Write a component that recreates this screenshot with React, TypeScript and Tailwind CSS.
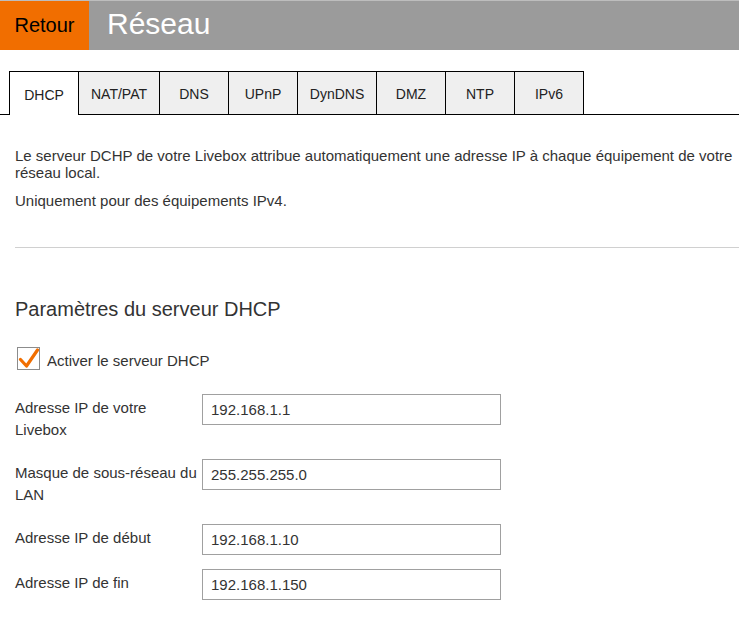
import React from 'react';

const tabs: { label: string; width: string }[] = [
  { label: 'DHCP', width: 'w-[69px]' },
  { label: 'NAT/PAT', width: 'w-[81px]' },
  { label: 'DNS', width: 'w-[69px]' },
  { label: 'UPnP', width: 'w-[69px]' },
  { label: 'DynDNS', width: 'w-[79px]' },
  { label: 'DMZ', width: 'w-[69px]' },
  { label: 'NTP', width: 'w-[69px]' },
  { label: 'IPv6', width: 'w-[70px] border-r' },
];

const fields = [
  { label: 'Adresse IP de votre Livebox', value: '192.168.1.1' },
  { label: 'Masque de sous-réseau du LAN', value: '255.255.255.0' },
  { label: 'Adresse IP de début', value: '192.168.1.10' },
  { label: 'Adresse IP de fin', value: '192.168.1.150' },
];

const CheckMark: React.FC = () => (
  <span className="w-[23px] h-[23px] border border-[#8c8c8c] bg-white flex items-center justify-center shrink-0">
    <svg width="21" height="21" viewBox="0 0 21 21" fill="none">
      <path d="M2.5 11.5 L8.5 18 L19.5 2" stroke="#f16e00" strokeWidth="3.2" strokeLinecap="round" strokeLinejoin="round" />
    </svg>
  </span>
);

export default function App() {
  return (
    <div className="w-[739px] h-[627px] overflow-hidden bg-white text-[#333] font-['Liberation_Sans',Arial,sans-serif]">
      {/* top bar */}
      <header className="flex h-[50px] border-t border-[#bdbdbd]">
        <div className="w-[89px] bg-[#f16e00] flex items-center justify-center text-[20px] text-black pb-[1px]">Retour</div>
        <div className="flex-1 bg-[#9b9b9b] flex items-center pl-[18px] text-[30px] text-white pb-[4px]">Réseau</div>
      </header>

      {/* tabs */}
      <nav className="mt-[21px] flex items-end pl-[9px] border-b border-black">
        {tabs.map((t, i) => (
          <div
            key={t.label}
            className={`${t.width} border-l border-t border-black flex items-center justify-center text-[14px] text-[#222] pt-[3px] ${
              i === 0 ? 'h-[44px] -mb-px bg-white relative' : 'h-[43px] bg-[#efefef]'
            }`}
          >
            {t.label}
          </div>
        ))}
      </nav>

      <main className="pl-[15px] text-[15px]">
        <p className="mt-[32px] leading-[17px]">
          Le serveur DCHP de votre Livebox attribue automatiquement une adresse IP à chaque équipement de votre réseau local.
        </p>
        <p className="mt-[11px] leading-[17px]">Uniquement pour des équipements IPv4.</p>

        <hr className="mt-[38px] border-0 border-t border-[#d0d0d0]" />

        <h2 className="mt-[50px] text-[20px] leading-[23px]">Paramètres du serveur DHCP</h2>

        <label className="mt-[26px] ml-[2px] flex items-center gap-[7px] h-[23px]">
          <CheckMark />
          <span className="pt-[5px]">Activer le serveur DHCP</span>
        </label>

        <div className="mt-[24px]">
          {fields.map((f) => (
            <div key={f.label} className="flex items-start mb-[14px]">
              <div className="w-[187px] pt-[3px] pb-[4px] leading-[22px]">{f.label}</div>
              <input
                readOnly
                value={f.value}
                className="w-[299px] h-[31px] border border-[#a0a0a0] px-[8px] text-[15px] text-[#333] outline-none"
              />
            </div>
          ))}
        </div>
      </main>
    </div>
  );
}
